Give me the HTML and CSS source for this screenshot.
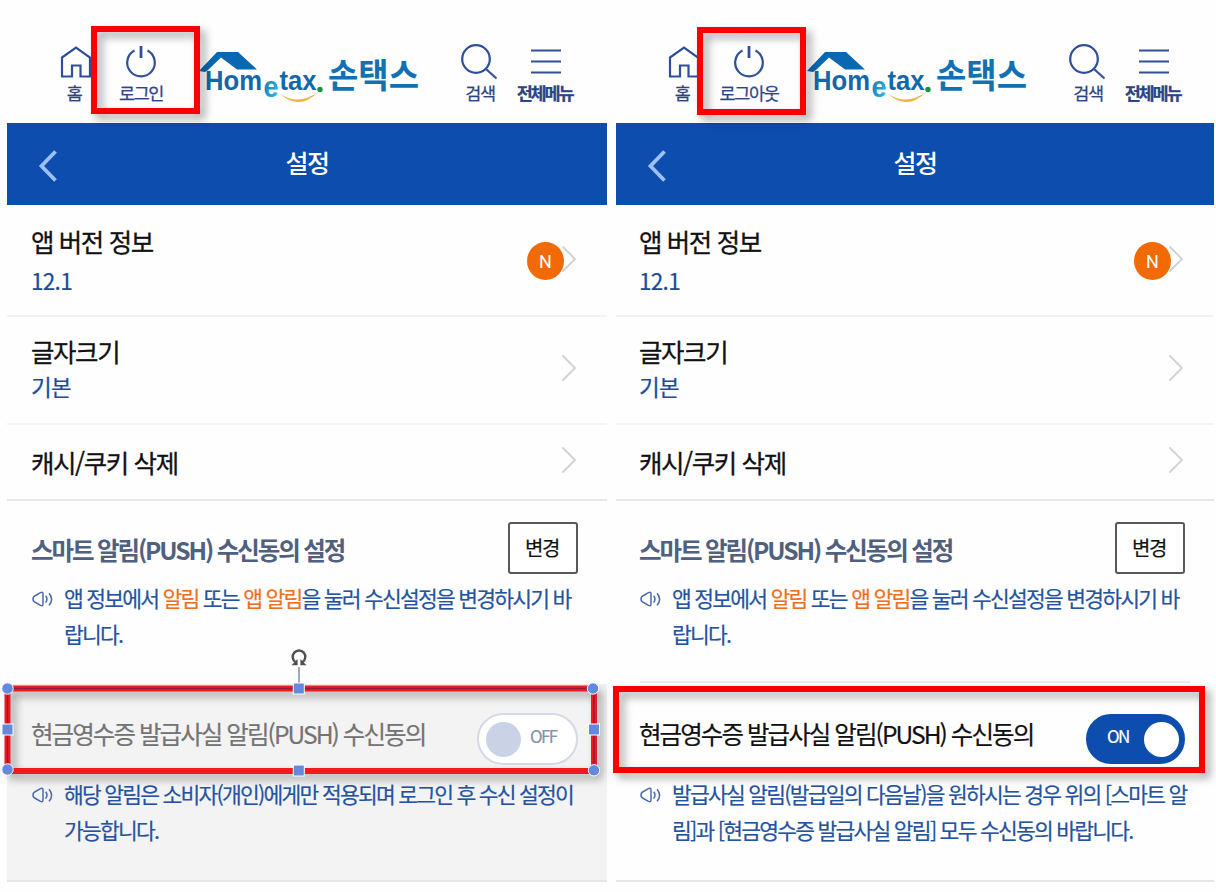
FILE: index.html
```
<!DOCTYPE html>
<html lang="ko">
<head>
    <meta charset="UTF-8">
    <meta name="viewport" content="width=device-width, initial-scale=1.0">
    <title>손택스 설정</title>
    <link rel="stylesheet" href="styles.css">
</head>
<body>
    <!-- Shared icons -->
    <svg class="sprite" width="0" height="0">
        <defs>
            <linearGradient id="eFill" x1="0" y1="0" x2="1" y2="1">
                <stop offset="0" stop-color="#0b6db8"/>
                <stop offset="1" stop-color="#35c3e0"/>
            </linearGradient>
        </defs>
        <symbol id="home" viewBox="0 0 32 34">
            <path d="M2 12.5 L16 2.5 L30 12.5 V31.5 H20.5 V20.5 H12 V31.5 H2 Z"/>
        </symbol>
        <symbol id="power" viewBox="0 0 32 34">
            <path d="M9.5 5.5 A13.8 13.8 0 1 0 22.5 5.5"/>
            <path d="M16 1 V13" stroke-width="2.8"/>
        </symbol>
        <symbol id="search" viewBox="0 0 38 38">
            <circle cx="16" cy="16" r="13.8"/>
            <path d="M26 26 L36.5 35.5"/>
        </symbol>
        <symbol id="menu" viewBox="0 0 32 34">
            <path d="M1 5.5 H31 M1 16.5 H31 M1 27.5 H31"/>
        </symbol>
        <symbol id="next" viewBox="0 0 16 28">
            <path d="M1.5 1.5 L14 14 L1.5 26.5"/>
        </symbol>
        <symbol id="speaker" viewBox="0 0 22 18">
            <path d="M1 9 Q1 6.5 3.5 5.5 L8.5 2.6 Q11 1.6 11 4 V14 Q11 16.4 8.5 15.4 L3.5 12.5 Q1 11.5 1 9 Z"/>
            <path d="M13.6 5.8 Q16.4 9 13.6 12.6 M17 3.2 Q22.2 9 17 15.4"/>
        </symbol>
    </svg>

    <div class="screens">
        <!-- Logged out -->
        <div class="phone">
            <div class="top">
                <div class="tool home"><svg class="icon"><use href="#home"/></svg><span>홈</span></div>
                <div class="tool"><svg class="icon"><use href="#power"/></svg><span>로그인</span></div>
                <svg class="logo" viewBox="0 0 222 56">
                    <path class="roof" d="M2 20 L20 1 H41 L60 18.5 H40 L24 6.5 L11 19 L8 21 Z"/>
                    <text class="word" x="8" y="39" textLength="57" lengthAdjust="spacingAndGlyphs">Hom</text>
                    <text class="word-e" x="66.5" y="46" textLength="15" lengthAdjust="spacingAndGlyphs">e</text>
                    <text class="word" x="82.5" y="39" textLength="37" lengthAdjust="spacingAndGlyphs">tax</text>
                    <circle cx="123" cy="38.5" r="2.7" fill="#15953f"/>
                    <path class="smile" d="M83 43 Q102 55 121 41 Q103 60 83 43 Z"/>
                    <text class="ko" x="131" y="37" textLength="91" lengthAdjust="spacingAndGlyphs">손택스</text>
                </svg>
                <div class="tool search"><svg class="icon icon-search"><use href="#search"/></svg><span>검색</span></div>
                <div class="tool menu"><svg class="icon"><use href="#menu"/></svg><span>전체메뉴</span></div>
            </div>
            <div class="title-bar">
                <svg class="back" viewBox="0 0 20 34"><path d="M17.5 2.5 L3.5 17 L17.5 31.5"/></svg>
                <h1>설정</h1>
            </div>
            <div class="row row-version">
                <div>
                    <p class="name">앱 버전 정보</p>
                    <p class="value">12.1</p>
                </div>
                <span class="new">N</span>
                <svg class="next"><use href="#next"/></svg>
            </div>
            <div class="row row-size">
                <div>
                    <p class="name">글자크기</p>
                    <p class="value">기본</p>
                </div>
                <svg class="next"><use href="#next"/></svg>
            </div>
            <div class="row row-cache">
                <p class="name">캐시/쿠키 삭제</p>
                <svg class="next"><use href="#next"/></svg>
            </div>
            <div class="push">
                <div class="push-head">
                    <h2>스마트 알림(PUSH) 수신동의 설정</h2>
                    <button>변경</button>
                </div>
                <div class="note">
                    <svg class="speaker"><use href="#speaker"/></svg>
                    <p>앱 정보에서 <em>알림</em> 또는 <em>앱 알림</em>을 눌러 수신설정을 변경하시기 바<br>랍니다.</p>
                </div>
            </div>
            <div class="receipt disabled">
                <div class="receipt-head">
                    <p>현금영수증 발급사실 알림(PUSH) 수신동의</p>
                    <div class="toggle"><i></i><span>OFF</span></div>
                </div>
                <div class="note">
                    <svg class="speaker"><use href="#speaker"/></svg>
                    <p>해당 알림은 소비자(개인)에게만 적용되며 로그인 후 수신 설정이<br>가능합니다.</p>
                </div>
            </div>
        </div>

        <!-- Logged in -->
        <div class="phone second">
            <div class="top">
                <div class="tool home"><svg class="icon"><use href="#home"/></svg><span>홈</span></div>
                <div class="tool"><svg class="icon"><use href="#power"/></svg><span>로그아웃</span></div>
                <svg class="logo" viewBox="0 0 222 56">
                    <path class="roof" d="M2 20 L20 1 H41 L60 18.5 H40 L24 6.5 L11 19 L8 21 Z"/>
                    <text class="word" x="8" y="39" textLength="57" lengthAdjust="spacingAndGlyphs">Hom</text>
                    <text class="word-e" x="66.5" y="46" textLength="15" lengthAdjust="spacingAndGlyphs">e</text>
                    <text class="word" x="82.5" y="39" textLength="37" lengthAdjust="spacingAndGlyphs">tax</text>
                    <circle cx="123" cy="38.5" r="2.7" fill="#15953f"/>
                    <path class="smile" d="M83 43 Q102 55 121 41 Q103 60 83 43 Z"/>
                    <text class="ko" x="131" y="37" textLength="91" lengthAdjust="spacingAndGlyphs">손택스</text>
                </svg>
                <div class="tool search"><svg class="icon icon-search"><use href="#search"/></svg><span>검색</span></div>
                <div class="tool menu"><svg class="icon"><use href="#menu"/></svg><span>전체메뉴</span></div>
            </div>
            <div class="title-bar">
                <svg class="back" viewBox="0 0 20 34"><path d="M17.5 2.5 L3.5 17 L17.5 31.5"/></svg>
                <h1>설정</h1>
            </div>
            <div class="row row-version">
                <div>
                    <p class="name">앱 버전 정보</p>
                    <p class="value">12.1</p>
                </div>
                <span class="new">N</span>
                <svg class="next"><use href="#next"/></svg>
            </div>
            <div class="row row-size">
                <div>
                    <p class="name">글자크기</p>
                    <p class="value">기본</p>
                </div>
                <svg class="next"><use href="#next"/></svg>
            </div>
            <div class="row row-cache">
                <p class="name">캐시/쿠키 삭제</p>
                <svg class="next"><use href="#next"/></svg>
            </div>
            <div class="push">
                <div class="push-head">
                    <h2>스마트 알림(PUSH) 수신동의 설정</h2>
                    <button>변경</button>
                </div>
                <div class="note">
                    <svg class="speaker"><use href="#speaker"/></svg>
                    <p>앱 정보에서 <em>알림</em> 또는 <em>앱 알림</em>을 눌러 수신설정을 변경하시기 바<br>랍니다.</p>
                </div>
                <hr>
            </div>
            <div class="receipt">
                <div class="receipt-head">
                    <p>현금영수증 발급사실 알림(PUSH) 수신동의</p>
                    <div class="toggle on"><span>ON</span><i></i></div>
                </div>
                <div class="note">
                    <svg class="speaker"><use href="#speaker"/></svg>
                    <p>발급사실 알림(발급일의 다음날)을 원하시는 경우 위의 [스마트 알<br>림]과 [현금영수증 발급사실 알림] 모두 수신동의 바랍니다.</p>
                </div>
            </div>
        </div>
    </div>

    <!-- Red highlight boxes laid over the screens -->
    <div class="mark mark-login"></div>
    <div class="mark mark-logout"></div>
    <div class="mark mark-on"></div>
    <!-- Selected box with its resize handles -->
    <svg class="selection" width="616" height="150" viewBox="0 0 616 150">
        <g class="frame">
            <path class="red" d="M7.5 48.5 H594 V131 H7.5 Z"/>
        </g>
        <path class="core" d="M7.5 131 V48.5 H594 V131"/>
        <path class="stem" d="M299 27 V43"/>
        <path class="rotate" d="M295.5 22 A6.3 6.3 0 1 1 302.5 22"/>
        <path class="arrows" d="M291.5 25.2 H297.6 V19 Z M306.5 25.2 H300.4 V19 Z"/>
        <g class="handles">
            <circle cx="7.5" cy="48.5" r="5.7"/>
            <circle cx="593" cy="48.5" r="5.7"/>
            <circle cx="7.5" cy="129.5" r="5.7"/>
            <circle cx="594" cy="130.3" r="5.7"/>
            <rect x="293.3" y="43" width="11" height="11"/>
            <rect x="293.3" y="125" width="11" height="11"/>
            <rect x="2" y="84" width="11" height="11"/>
            <rect x="588.5" y="84" width="11" height="11"/>
        </g>
    </svg>
</body>
</html>
```
FILE: styles.css
```
* {
    box-sizing: border-box;
}

body {
    margin: 0;
    width: 1216px;
    height: 892px;
    position: relative;
    overflow: hidden;
    background: #fefefe;
    color: #111;
    font-family: "Noto Sans CJK KR", "Noto Sans", sans-serif;
}

h1, h2, p {
    margin: 0;
    white-space: nowrap;
}

.sprite {
    position: absolute;
}

.screens {
    display: grid;
    grid-template-columns: 600px 598px;
    gap: 9px;
    padding-left: 7px;
}

/* Top icons and logo */
.top {
    display: flex;
    height: 123px;
    padding: 45px 0 0 39px;
}

.second .top {
    padding-left: 38px;
}

.tool {
    display: flex;
    flex-direction: column;
    align-items: center;
    width: 60px;
    margin-right: 5px;
    color: #2b4583;
    font-size: 17.5px;
    line-height: 24px;
    letter-spacing: -1.4px;
    white-space: nowrap;
    -webkit-text-stroke: 0.25px;
}

.home span {
    margin-left: -4px;
}

.icon {
    width: 32px;
    height: 34px;
    margin-bottom: 2px;
    fill: none;
    stroke: #2f4f9b;
    stroke-width: 2.2;
}

.icon-search {
    width: 38px;
    height: 38px;
    margin: -2px 0 0;
}

.search {
    margin-right: 7px;
}

.search span {
    margin-left: 2px;
}

.menu {
    font-weight: bold;
    letter-spacing: -2.2px;
}

.menu span {
    margin-left: -3px;
}

.logo {
    width: 222px;
    height: 56px;
    margin: 6px 30px 0 21px;
    flex: none;
    overflow: visible;
}

.roof {
    fill: #0a68b3;
}

.word {
    font: bold 28px "Liberation Sans", sans-serif;
    fill: #1467a8;
}

.word-e {
    font: bold 30px "Liberation Sans", sans-serif;
    fill: url(#eFill);
}

.ko {
    font: bold 34px "Noto Sans CJK KR", sans-serif;
    fill: #1271b3;
}

.smile {
    fill: #f0b33c;
}

/* Blue title bar */
.title-bar {
    display: grid;
    grid-template-columns: 80px 1fr 80px;
    align-items: center;
    height: 82px;
    background: #0c4dae;
    color: #fff;
}

.back {
    width: 20px;
    height: 34px;
    margin: 3px 0 0 31px;
    fill: none;
    stroke: #9fc0f5;
    stroke-width: 3.8;
}

h1 {
    margin-top: -4px;
    text-align: center;
    font-size: 25px;
    font-weight: 500;
    letter-spacing: -1.6px;
}

/* Setting rows */
.row {
    display: flex;
    align-items: center;
    justify-content: space-between;
    padding: 0 30px 0 24px;
    border-bottom: 2px solid #f3f3f4;
}

.second .row {
    padding-left: 23px;
}

.name {
    font-size: 25.5px;
    line-height: 36px;
    letter-spacing: -1.4px;
    -webkit-text-stroke: 0.3px;
}

.value {
    font-size: 22.5px;
    line-height: 34px;
    letter-spacing: -0.7px;
    color: #1b4c9c;
    -webkit-text-stroke: 0.2px;
}

.row-version {
    height: 112px;
}

.row-version .value {
    margin-top: 4px;
}

.row-version .next {
    margin-top: -3px;
}

.row-size {
    height: 108px;
    padding-bottom: 4px;
}

.row-cache {
    height: 76px;
    border-color: #e6e6e8;
}

.row-cache .next {
    margin-top: -4px;
}

.next {
    width: 16px;
    height: 28px;
    fill: none;
    stroke: #cfd0d4;
    stroke-width: 1.8;
}

.new {
    display: flex;
    align-items: center;
    justify-content: center;
    width: 37px;
    height: 38px;
    margin: 2px -3px 0 auto;
    border-radius: 50%;
    background: #f26a05;
    color: #fff;
    font: 18px Roboto, sans-serif;
}

/* Push alarm section */
.push {
    height: 183px;
    padding: 21px 0 0 25px;
}

.second .push,
.second .receipt {
    padding-left: 24px;
}

.push-head {
    display: flex;
    align-items: center;
    justify-content: space-between;
    padding-right: 29px;
}

h2 {
    margin: 3px 0 0 -1px;
    color: #50617f;
    font-size: 24.5px;
    font-weight: bold;
    letter-spacing: -2.1px;
}

button {
    width: 70px;
    height: 52px;
    padding: 0 2px 2px 0;
    border: 2px solid #57585a;
    border-radius: 3px;
    background: #fff;
    color: #111;
    font: 20px "Noto Sans CJK KR", sans-serif;
    letter-spacing: -1.4px;
    -webkit-text-stroke: 0.2px;
}

.note {
    display: flex;
    margin-top: 6px;
    color: #2453a0;
    font-size: 21.5px;
    line-height: 36px;
    letter-spacing: -1.77px;
    -webkit-text-stroke: 0.2px;
}

.speaker {
    flex: none;
    width: 22px;
    height: 18px;
    margin: 10px 10px 0 0;
    fill: none;
    stroke: #4a6ba8;
    stroke-width: 1.5;
}

em {
    font-style: normal;
    color: #f0701f;
}

hr {
    height: 2px;
    margin: 29px 24px 0 0;
    border: 0;
    background: #ececee;
}

/* Cash receipt section */
.receipt {
    height: 198px;
    padding: 30px 0 0 25px;
    border-bottom: 2px solid #e6e6e8;
}

.disabled {
    background: #f4f3f4;
}

.receipt-head {
    display: flex;
    justify-content: space-between;
    height: 52px;
    padding-right: 29px;
    font-size: 24.5px;
    line-height: 40px;
    letter-spacing: -1.93px;
    -webkit-text-stroke: 0.2px;
}

.receipt-head p {
    margin-left: -1px;
}

.disabled .receipt-head {
    color: #747474;
}

.receipt .note {
    margin-top: 10px;
}

.toggle {
    display: flex;
    align-items: center;
    gap: 9px;
    width: 101px;
    height: 52px;
    margin-top: -1px;
    padding-left: 7px;
    border: 2px solid #d3d9e7;
    border-radius: 26px;
    background: #fff;
    color: #8691ab;
    font-size: 17px;
    letter-spacing: -1.6px;
}

.toggle i {
    width: 35px;
    height: 35px;
    border-radius: 50%;
    background: #cad3e6;
}

.toggle span {
    margin-top: -6px;
}

.toggle.on {
    gap: 15px;
    width: 99px;
    height: 50px;
    margin-top: 0;
    padding-left: 19px;
    border-color: #0c4dae;
    background: #0c4dae;
    color: #fff;
}

.toggle.on i {
    background: #fff;
}

/* Overlays */
.mark {
    position: absolute;
    border: 6px solid #fb0000;
    filter: drop-shadow(5px 5px 4px rgba(0, 0, 0, 0.35));
}

.mark-login {
    left: 91px;
    top: 26px;
    width: 109px;
    height: 88px;
}

.mark-logout {
    left: 697px;
    top: 27px;
    width: 109px;
    height: 88px;
}

.mark-on {
    left: 613px;
    top: 686px;
    width: 592px;
    height: 87px;
}

.selection {
    position: absolute;
    left: 0;
    top: 640px;
}

.frame {
    fill: none;
    filter: drop-shadow(5px 5px 4px rgba(0, 0, 0, 0.35));
}

.red {
    stroke: #ee1c22;
    stroke-width: 6;
}

.core {
    fill: none;
    stroke: #9c1730;
    stroke-width: 1.5;
}

.stem {
    stroke: #5b7196;
    stroke-width: 1.2;
}

.rotate {
    fill: none;
    stroke: #505050;
    stroke-width: 2.4;
}

.arrows {
    fill: #505050;
}

.handles {
    fill: #6488dc;
    stroke: #fff;
    stroke-width: 1;
}
```
